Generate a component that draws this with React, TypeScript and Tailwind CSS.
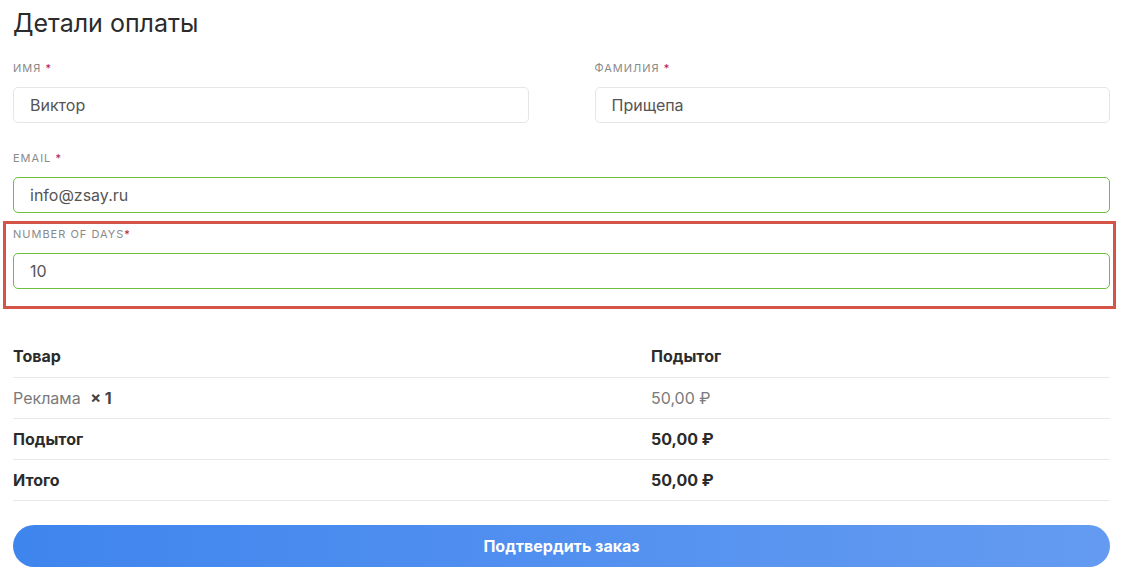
import React from 'react';

function Label({ text, gap = true }: { text: string; gap?: boolean }) {
  return (
    <label className="block text-[11px] uppercase tracking-[1px] text-[#8a8a8a] leading-[14px]">
      {text}
      {gap ? ' ' : ''}
      <span className="text-[#b0174a]">*</span>
    </label>
  );
}

function Field({ label, value, valid, gap }: { label: string; value: string; valid?: boolean; gap?: boolean }) {
  return (
    <div>
      <Label text={label} gap={gap} />
      <input
        readOnly
        value={value}
        className={
          'mt-[12px] w-full h-[36px] rounded-[5px] border px-[16px] text-[16px] text-[#555] outline-none ' +
          (valid ? 'border-[#6cc03b]' : 'border-[#e6e6e6]')
        }
      />
    </div>
  );
}

export default function App() {
  const rows = [
    { a: 'Подытог', b: '50,00 ₽' },
    { a: 'Итого', b: '50,00 ₽' },
  ];
  return (
    <div className="bg-white w-[1123px] h-[575px] overflow-hidden px-[13px] pt-[6px]" style={{ fontFamily: 'Inter, "Noto Sans", sans-serif' }}>
      <h3 className="text-[25px] leading-[34px] text-[#2b2b2b] font-normal">Детали оплаты</h3>

      <div className="mt-[21px] grid grid-cols-2 gap-x-[66px]">
        <Field label="Имя" value="Виктор" />
        <Field label="Фамилия" value="Прищепа" />
      </div>

      <div className="mt-[28px]">
        <Field label="Email" value="info@zsay.ru" valid />
      </div>

      <div className="mt-[8px] -ml-[10px] -mr-[6px] border-[3px] border-[#d5544a] pl-[7px] pr-[3px] pt-[3px] pb-[17px]">
        <Field label="Number of days" value="10" valid gap={false} />
      </div>

      <table className="mt-[27px] w-full text-[16px] border-collapse">
        <thead>
          <tr className="border-b border-[#e8e8e8]">
            <th className="text-left font-bold text-[#2b2b2b] h-[41px] pb-[0px] w-[638px]">Товар</th>
            <th className="text-left font-bold text-[#2b2b2b] pb-[0px]">Подытог</th>
          </tr>
        </thead>
        <tbody>
          <tr className="border-b border-[#e8e8e8]">
            <td className="h-[41px] pt-[1px] text-[#7a7a7a]">
              Реклама <strong className="ml-[5px] font-bold text-[#444]">× 1</strong>
            </td>
            <td className="pt-[1px] text-[#7a7a7a]">50,00 ₽</td>
          </tr>
          {rows.map((r) => (
            <tr key={r.a} className="border-b border-[#e8e8e8]">
              <td className="h-[41px] pt-[1px] font-bold text-[#2b2b2b]">{r.a}</td>
              <td className="pt-[1px] font-bold text-[#2b2b2b]">{r.b}</td>
            </tr>
          ))}
        </tbody>
      </table>

      <button className="mt-[24px] w-full h-[42px] rounded-full bg-gradient-to-r from-[#3f85ee] to-[#649bf1] text-white font-bold text-[16px]">
        Подтвердить заказ
      </button>
    </div>
  );
}
